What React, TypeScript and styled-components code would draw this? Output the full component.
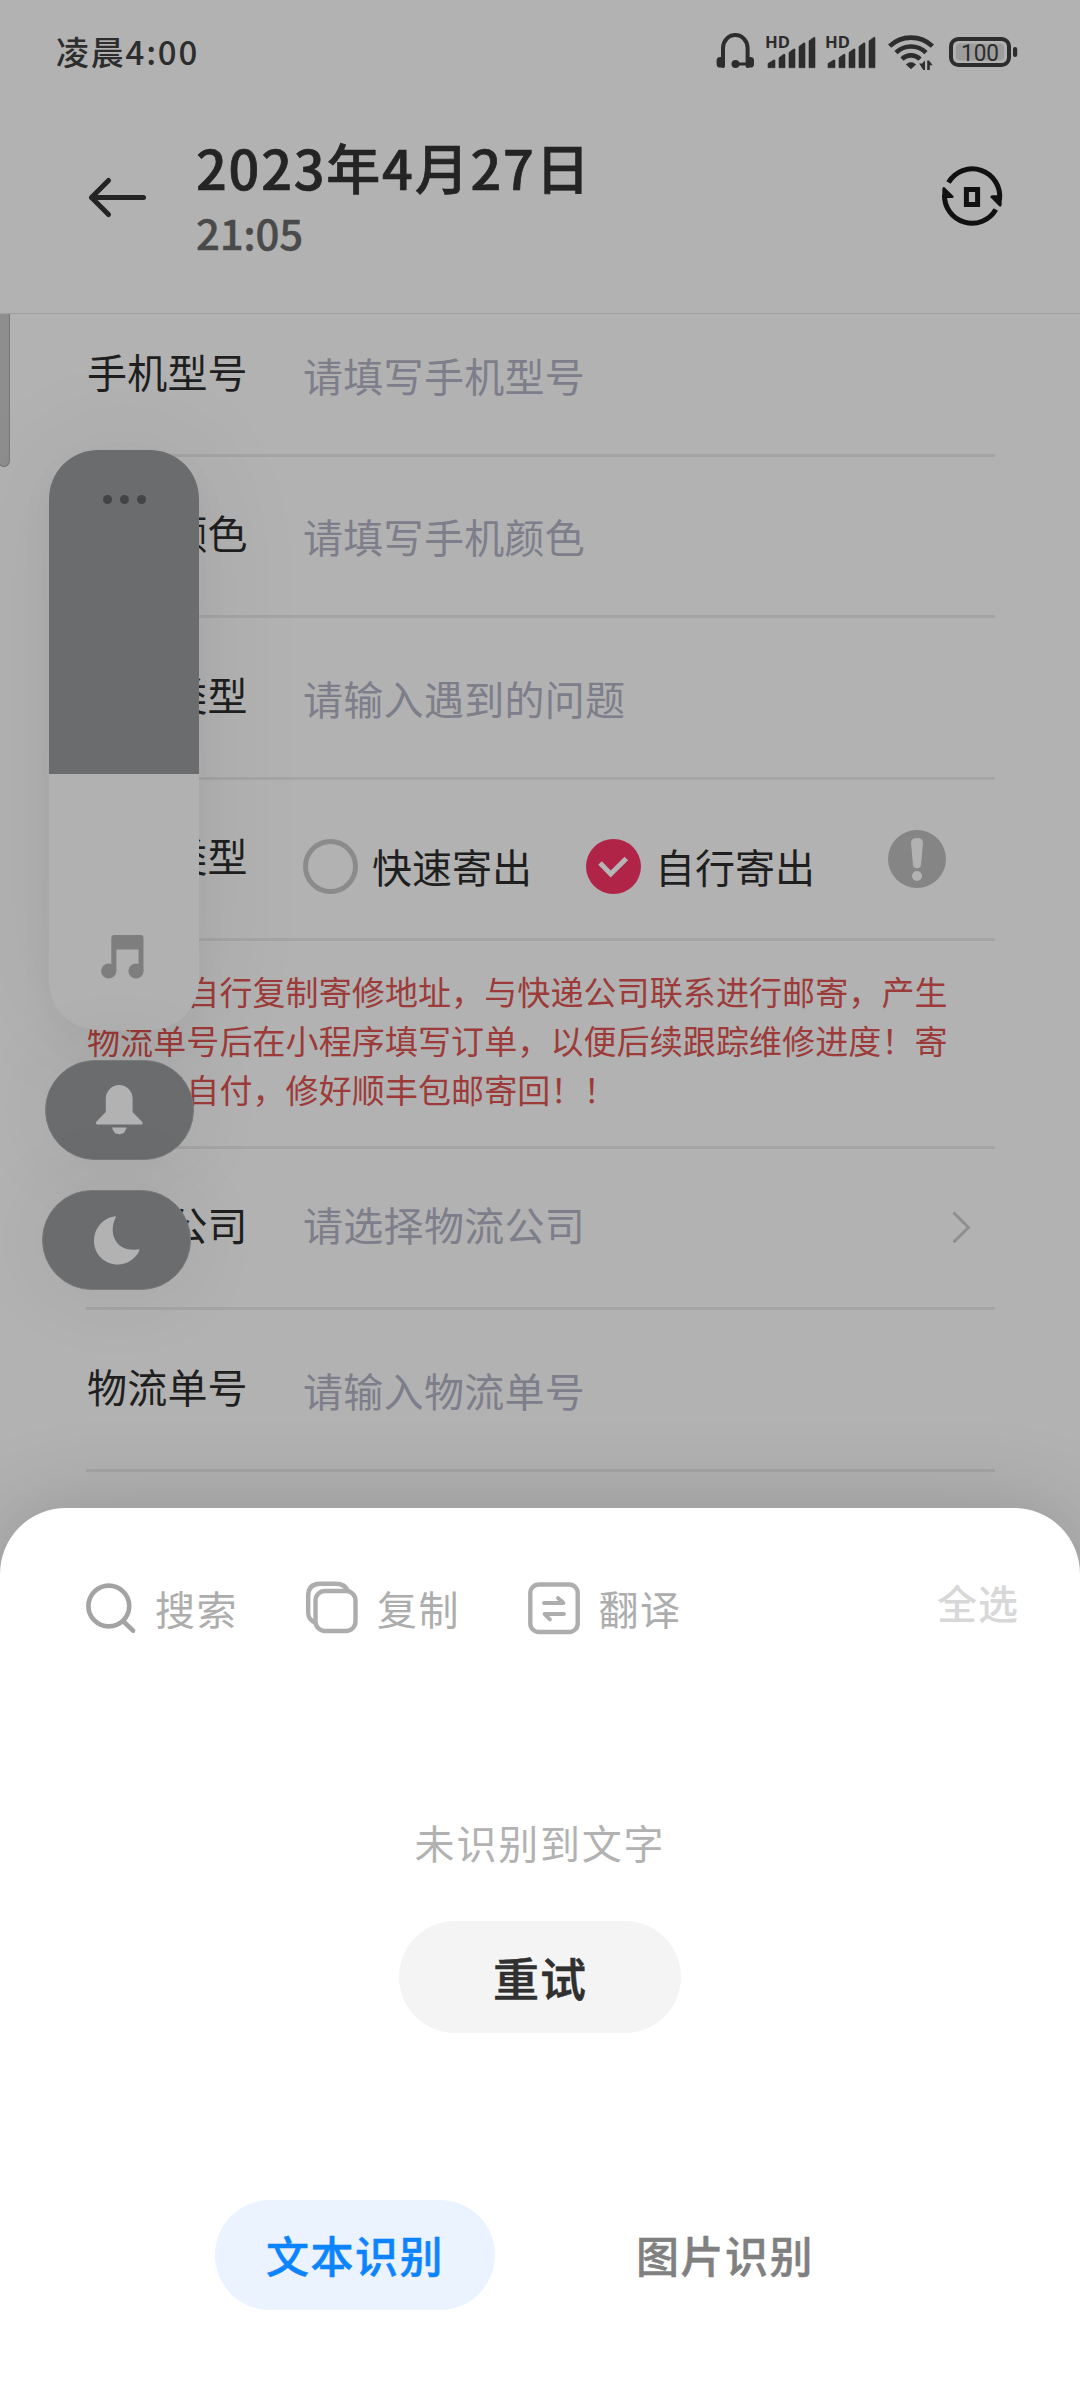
import React from "react";
import styled, { createGlobalStyle } from "styled-components";

const GlobalStyle = createGlobalStyle`
  body {
    margin: 0;
    background: #b2b2b2;
    font-family: "Noto Sans CJK SC", "Noto Sans", sans-serif;
    text-spacing-trim: space-all;
  }
  * { box-sizing: border-box; }
`;

const Screen = styled.div`
  position: relative;
  width: 1080px;
  height: 2400px;
  overflow: hidden;
  display: flex;
  flex-direction: column;
  background: #b2b2b2;
`;

const StatusBar = styled.div`
  height: 104px;
  flex: none;
  display: flex;
  justify-content: space-between;
  padding: 0 63px 0 56px;
  color: #2d2d2d;
`;

const Clock = styled.span`
  font-size: 33px;
  font-weight: 500;
  line-height: 102px;
  letter-spacing: 1.8px;
`;

const StatusIcons = styled.div`
  display: flex;
  align-items: flex-start;
  padding-top: 30px;
`;

const SignalSlot = styled.div`
  display: flex;
  margin: 0 2px 0 10px;
`;

const Glyph = styled.svg`
  display: block;
  flex: none;
  overflow: visible;
`;

const Header = styled.header`
  height: 210px;
  flex: none;
  display: flex;
  align-items: center;
  padding: 0 77px 23px 88px;
  border-bottom: 1px solid #a0a0a0;
`;

const Heading = styled.div`
  flex: 1;
  display: flex;
  flex-direction: column;
  margin-left: 49px;
`;

const Title = styled.h1`
  margin: 0;
  font-size: 54px;
  font-weight: 500;
  line-height: 70px;
  letter-spacing: 1.8px;
  color: #242424;
  -webkit-text-stroke: 0.7px #242424;
`;

const Subtitle = styled.span`
  font-size: 42px;
  font-weight: 500;
  line-height: 60px;
  letter-spacing: -0.3px;
  color: #4a4a4a;
  -webkit-text-stroke: 0.4px #4a4a4a;
`;

const Form = styled.main`
  height: 1194px;
  flex: none;
  display: flex;
  flex-direction: column;
  padding: 0 85px 0 86px;
`;

const Row = styled.div<{ $height: number; $end?: number }>`
  height: ${(p) => p.$height}px;
  flex: none;
  display: flex;
  align-items: flex-end;
  padding: 0 ${(p) => p.$end ?? 0}px 53px 0;
  border-bottom: 3px solid #a5a5a5;
`;

const Label = styled.label`
  width: 217px;
  flex: none;
  padding-left: 1px;
  font-size: 40px;
  line-height: 60px;
  letter-spacing: 0.2px;
  color: #1f1f1f;
`;

const Placeholder = styled.span<{ $drop?: number }>`
  flex: 1;
  font-size: 40px;
  line-height: 60px;
  letter-spacing: 0.3px;
  margin-bottom: ${(p) => -(p.$drop ?? 0)}px;
  color: #7d7e8a;
`;

const Options = styled.div`
  flex: 1;
  display: flex;
  gap: 54px;
  margin: 0 0 -11px 0;
`;

const Option = styled.div`
  display: flex;
  align-items: center;
  gap: 14px;
  font-size: 40px;
  line-height: 60px;
  color: #1f1f1f;
`;

const Radio = styled.span<{ $checked?: boolean }>`
  width: 55px;
  height: 55px;
  display: grid;
  place-items: center;
  border-radius: 50%;
  border: ${(p) => (p.$checked ? "0" : "5px solid #8b8b8b")};
  background: ${(p) => (p.$checked ? "#b02448" : "transparent")};
`;

const InfoSlot = styled.div`
  margin-bottom: -3px;
`;

const ChevronSlot = styled.div`
  margin-bottom: 11px;
`;

const Notice = styled.p`
  margin: 0;
  height: 208px;
  flex: none;
  padding: 26px 0 0 1px;
  border-bottom: 3px solid #a5a5a5;
  font-size: 33px;
  line-height: 49px;
  letter-spacing: 0.1px;
  white-space: nowrap;
  color: #9c3b39;
`;

const ScrollThumb = styled.div`
  position: absolute;
  left: -2px;
  top: 314px;
  width: 12px;
  height: 153px;
  border: 1px solid #777;
  border-top: 0;
  border-radius: 0 0 6px 6px;
  background: #8e8e8e;
`;

const VolumeOverlay = styled.aside`
  position: absolute;
  left: 42px;
  top: 450px;
  display: flex;
  flex-direction: column;
`;

const VolumeSlider = styled.div`
  width: 150px;
  height: 580px;
  margin-left: 7px;
  border-radius: 49px;
  overflow: hidden;
  display: flex;
  flex-direction: column;
  background: #b1b1b1;
  box-shadow: 0 0 120px rgba(0, 0, 0, 0.07), 0 16px 40px rgba(0, 0, 0, 0.03);
`;

const VolumeRest = styled.div`
  height: 324px;
  display: flex;
  justify-content: center;
  gap: 8px;
  padding-top: 45px;
  background: #6b6c6e;
`;

const Dot = styled.i`
  width: 9px;
  height: 9px;
  border-radius: 50%;
  background: #444;
`;

const VolumeLevel = styled.div`
  flex: 1;
  display: flex;
  justify-content: center;
  align-items: flex-end;
  padding: 0 4px 51px 0;
`;

const ModePill = styled.button<{ $left: number }>`
  width: 149px;
  height: 100px;
  margin: 30px 0 0 ${(p) => p.$left}px;
  padding: 0;
  display: grid;
  place-items: center;
  border: 1px solid #787979;
  border-radius: 50px;
  background: #6b6c6e;
  box-shadow: 0 0 90px rgba(0, 0, 0, 0.07);
`;

const Sheet = styled.section`
  position: relative;
  flex: 1;
  display: flex;
  flex-direction: column;
  align-items: center;
  border-radius: 66px 66px 0 0;
  background: #fff;
  box-shadow: 0 0 90px rgba(0, 0, 0, 0.17);
`;

const Actions = styled.div`
  width: 100%;
  height: 200px;
  display: flex;
  align-items: flex-start;
  padding: 70px 61px 0 86px;
`;

const Action = styled.div<{ $width: number }>`
  width: ${(p) => p.$width}px;
  display: flex;
  gap: 19px;
  font-size: 40px;
  line-height: 60px;
  letter-spacing: 1.6px;
  color: #adadad;
`;

const SelectAll = styled.span`
  margin-left: auto;
  font-size: 40px;
  font-weight: 500;
  line-height: 60px;
  letter-spacing: 1px;
  margin-top: -6px;
  color: #d8d8d8;
`;

const EmptyText = styled.p`
  margin: 103px 0 0;
  font-size: 40px;
  line-height: 62px;
  letter-spacing: 1.8px;
  color: #b2b2b2;
`;

const RetryButton = styled.button`
  width: 282px;
  height: 112px;
  margin-top: 48px;
  padding: 0 0 2px;
  border: 0;
  border-radius: 56px;
  background: #f4f4f4;
  font: 500 46px/110px "Noto Sans CJK SC", sans-serif;
  letter-spacing: 1px;
  color: #303030;
  -webkit-text-stroke: 0.5px #303030;
`;

const Tabs = styled.nav`
  display: flex;
  gap: 90px;
  margin-top: 167px;
`;

const Tab = styled.button<{ $active?: boolean }>`
  width: 280px;
  height: 110px;
  padding: 0 0 2px 0;
  border: 0;
  border-radius: 55px;
  background: ${(p) => (p.$active ? "#eaf3ff" : "transparent")};
  color: ${(p) => (p.$active ? "#0d84ff" : "#808080")};
  font: 500 43px/108px "Noto Sans CJK SC", sans-serif;
  letter-spacing: 1.5px;
  -webkit-text-stroke: 0.5px currentColor;
`;

const HeadphoneIcon = () => (
  <Glyph width="39" height="40" viewBox="715 30 39 40" fill="none" stroke="#2d2d2d">
    <path d="M722 66V48a12.3 13 0 0 1 24.6 0V66" strokeWidth="4" strokeLinecap="round" />
    <path d="M734 64h14" strokeWidth="3" />
    <rect x="715.6" y="57" width="8" height="10.5" rx="3.6" fill="#2d2d2d" stroke="none" />
    <rect x="745" y="57" width="8" height="10.5" rx="3.6" fill="#2d2d2d" stroke="none" />
    <circle cx="734.5" cy="64" r="4" fill="#2d2d2d" stroke="none" />
  </Glyph>
);

const BARS = [
  { x: 3, y: 60, w: 7 },
  { x: 14, y: 54.3, w: 6 },
  { x: 24, y: 49, w: 6 },
  { x: 34, y: 43, w: 6 },
  { x: 44, y: 37.4, w: 6 },
];

const SignalIcon = () => (
  <Glyph width="60" height="40" viewBox="0 30 60 40" fill="#2d2d2d">
    <text x="0" y="48" fontFamily="Noto Sans, sans-serif" fontSize="16.5" fontWeight="700" textLength="25" lengthAdjust="spacingAndGlyphs">
      HD
    </text>
    {BARS.map((b) => (
      <path key={b.x} d={`M${b.x} ${b.y + 3.5}L${b.x + b.w - 1.4} ${b.y}h1.4V67.7h-${b.w}z`} stroke="#2d2d2d" strokeWidth="0.6" strokeLinejoin="round" />
    ))}
  </Glyph>
);

const WifiIcon = () => (
  <Glyph width="62" height="42" viewBox="887 30 62 42" fill="none" stroke="#2d2d2d" strokeWidth="4.6">
    <path d="M889.6 46.2a31 31 0 0 1 42.800 0" />
    <path d="M896 52.600a21.500 21.500 0 0 1 30 0" />
    <path d="M902 59.200a12.500 12.500 0 0 1 18 0" />
    <path d="M906.2 64.600q4.800-4.400 9.600 0L911 68.800z" fill="#2d2d2d" strokeWidth="0.6" />
    <path d="M919.200 63.600h2.800l3-3.200v9.600h-1.700zM927.200 60.400h1.800l3.700 4.800h-2.900v4.800h-2.600z" fill="#2d2d2d" stroke="none" />
  </Glyph>
);

const BatteryIcon = () => (
  <Glyph width="68" height="42" viewBox="949 30 68 42">
    <rect x="951" y="39" width="58" height="26" rx="7.5" fill="none" stroke="#2d2d2d" strokeWidth="4" />
    <rect x="956" y="43.5" width="48" height="17" rx="4" fill="#9d9d9d" />
    <rect x="1013" y="47" width="4.2" height="10" rx="2" fill="#2d2d2d" />
    <text x="961" y="60.800" fontFamily="Roboto, sans-serif" fontSize="23" fill="#2d2d2d" textLength="38" lengthAdjust="spacingAndGlyphs">
      100
    </text>
  </Glyph>
);

const BackIcon = () => (
  <Glyph width="59" height="42" viewBox="88 176 59 42" fill="none" stroke="#242424" strokeWidth="5" strokeLinecap="round" strokeLinejoin="round">
    <path d="M143.5 197.5H91.5M108.5 180.5l-17 17 17 17" />
  </Glyph>
);

const SyncIcon = () => (
  <Glyph width="62" height="62" viewBox="941 166 62 62" fill="none" stroke="#111" strokeWidth="5">
    <path d="M948.5 182.5A27.5 27.5 0 0 1 999.5 200" />
    <path d="M995.8 209.5A27.5 27.5 0 0 1 944.5 195" />
    <path d="M942.4 188.5q1-2.4 2.6-.8l8.4 8.2q.6 2.2-2 2.2h-9.2z" fill="#111" stroke="none" />
    <path d="M1001.6 205.3q-1 2.4-2.6.8l-8.4-8.6q-.6-2.2 2-2.2h9.2z" fill="#111" stroke="none" />
    <rect x="966.4" y="189.5" width="11.2" height="15" />
  </Glyph>
);

const CheckIcon = () => (
  <Glyph width="55" height="55" viewBox="586 839 55 55" fill="none" stroke="#b5b5b5" strokeWidth="5">
    <path d="M600 863l10.7 11L626.3 858.4" />
  </Glyph>
);

const InfoIcon = () => (
  <Glyph width="58" height="58" viewBox="0 0 58 58" fill="#b2b2b2">
    <circle cx="29" cy="29" r="29" fill="#858585" />
    <path d="M23 13q0-5 6-5t6 5l-2 22q-.6 3.3-4 3.3t-4-3.3z" />
    <circle cx="29" cy="46" r="5" />
  </Glyph>
);

const ChevronIcon = () => (
  <Glyph width="18" height="32" viewBox="952 1211 18 32" fill="none" stroke="#8e8e8e" strokeWidth="2.8">
    <path d="M953.5 1212.6l15 14.8-15 14.8" />
  </Glyph>
);

const MusicIcon = () => (
  <Glyph width="43" height="44" viewBox="0 0 43 44" fill="#7e7e7e">
    <path d="M10.3 3q0-3 3-3h26.2q3 0 3 3v33h-5V14.5H15.4V36h-5.1z" />
    <circle cx="7.7" cy="36" r="7.6" />
    <circle cx="35" cy="36" r="7.6" />
  </Glyph>
);

const BellIcon = () => (
  <Glyph width="47" height="50" viewBox="0 0 47 50" fill="#b2b2b2">
    <path d="M9.8 14a13.4 14 0 0 1 26.800 0v13l9.500 9.800q1.300 2.800-1 2.800H1.2q-2-.2-.9-2.800L9.800 27z" />
    <path d="M16 42.5h14.6q-1.6 6.800-7.3 6.800T16 42.500z" />
  </Glyph>
);

const MoonIcon = () => (
  <Glyph width="46" height="49" viewBox="0 0 46 49" fill="#b2b2b2">
    <path d="M20 .6q2.6-.8 1.6 1.2C14 17 21.500 36 43 33.500q3.400-.6 2.200 1.500C41 43 33 48.600 24 48.600 10.500 48.600 0 38 0 25 0 13 8 2.500 20 .6z" />
  </Glyph>
);

const SearchIcon = () => (
  <Glyph width="50" height="60" viewBox="86 1578 50 60" fill="none" stroke="#a3a3a3" strokeWidth="4.600">
    <circle cx="108.800" cy="1606" r="20.400" />
    <path d="M123.500 1621.500l9.600 9.200" strokeLinecap="round" />
  </Glyph>
);

const CopyIcon = () => (
  <Glyph width="52" height="60" viewBox="306 1578 52 60" fill="none" stroke="#adadad" strokeWidth="4.400">
    <path d="M316 1623q-7.800-3-7.800-10v-17q0-12.200 12-12.200h15q10 0 12.600 7" />
    <rect x="315.500" y="1591" width="40" height="40" rx="9.500" />
  </Glyph>
);

const TranslateIcon = () => (
  <Glyph width="52" height="60" viewBox="527.500 1578 52 60" fill="none" stroke="#adadad" strokeWidth="4.400">
    <rect x="529.800" y="1584.500" width="47.400" height="47.500" rx="8.500" />
    <path d="M543.500 1603H563l-5.500-5M563.500 1614H544l5.500 5.500" strokeWidth="3.800" strokeLinecap="round" strokeLinejoin="round" />
  </Glyph>
);

const TextRow = ({ label, hint, height }: { label: string; hint: string; height: number }) => (
  <Row $height={height}>
    <Label>{label}</Label>
    <Placeholder $drop={4}>{hint}</Placeholder>
  </Row>
);

export default function App() {
  return (
    <Screen>
      <GlobalStyle />
      <StatusBar>
        <Clock>凌晨4:00</Clock>
        <StatusIcons>
          <HeadphoneIcon />
          <SignalSlot>
            <SignalIcon />
            <SignalIcon />
          </SignalSlot>
          <WifiIcon />
          <BatteryIcon />
        </StatusIcons>
      </StatusBar>
      <Header>
        <BackIcon />
        <Heading>
          <Title>2023年4月27日</Title>
          <Subtitle>21:05</Subtitle>
        </Heading>
        <SyncIcon />
      </Header>
      <Form>
        <TextRow label="手机型号" hint="请填写手机型号" height={143} />
        <TextRow label="手机颜色" hint="请填写手机颜色" height={161} />
        <TextRow label="故障类型" hint="请输入遇到的问题" height={162} />
        <Row $height={161} $end={49}>
          <Label>寄修类型</Label>
          <Options>
            <Option>
              <Radio />
              <span>快速寄出</span>
            </Option>
            <Option>
              <Radio $checked>
                <CheckIcon />
              </Radio>
              <span>自行寄出</span>
            </Option>
          </Options>
          <InfoSlot>
            <InfoIcon />
          </InfoSlot>
        </Row>
        <Notice>
          请用户自行复制寄修地址，与快递公司联系进行邮寄，产生
          <br />
          物流单号后在小程序填写订单，以便后续跟踪维修进度！寄
          <br />
          修运费自付，修好顺丰包邮寄回！！
        </Notice>
        <Row $height={161} $end={25}>
          <Label>物流公司</Label>
          <Placeholder>请选择物流公司</Placeholder>
          <ChevronSlot>
            <ChevronIcon />
          </ChevronSlot>
        </Row>
        <TextRow label="物流单号" hint="请输入物流单号" height={162} />
      </Form>
      <ScrollThumb />
      <VolumeOverlay>
        <VolumeSlider>
          <VolumeRest>
            <Dot />
            <Dot />
            <Dot />
          </VolumeRest>
          <VolumeLevel>
            <MusicIcon />
          </VolumeLevel>
        </VolumeSlider>
        <ModePill $left={3}>
          <BellIcon />
        </ModePill>
        <ModePill $left={0}>
          <MoonIcon />
        </ModePill>
      </VolumeOverlay>
      <Sheet>
        <Actions>
          <Action $width={220}>
            <SearchIcon />
            <span>搜索</span>
          </Action>
          <Action $width={221.5}>
            <CopyIcon />
            <span>复制</span>
          </Action>
          <Action $width={160}>
            <TranslateIcon />
            <span>翻译</span>
          </Action>
          <SelectAll>全选</SelectAll>
        </Actions>
        <EmptyText>未识别到文字</EmptyText>
        <RetryButton>重试</RetryButton>
        <Tabs>
          <Tab $active>文本识别</Tab>
          <Tab>图片识别</Tab>
        </Tabs>
      </Sheet>
    </Screen>
  );
}
